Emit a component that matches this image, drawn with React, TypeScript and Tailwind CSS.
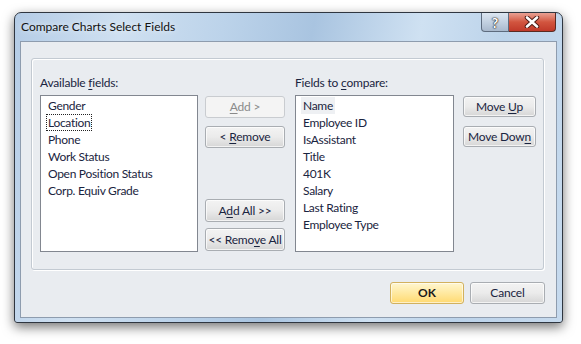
const font = "font-['Segoe_UI','Lato','Liberation_Sans',sans-serif]";

const leftFields = [
  "Gender",
  "Location",
  "Phone",
  "Work Status",
  "Open Position Status",
  "Corp. Equiv Grade",
];

const rightFields = [
  "Name",
  "Employee ID",
  "IsAssistant",
  "Title",
  "401K",
  "Salary",
  "Last Rating",
  "Employee Type",
];

function Mnemonic({ text, at }: { text: string; at: number }) {
  return (
    <span className="whitespace-pre">
      {text.slice(0, at)}
      <span className="underline underline-offset-2">{text[at]}</span>
      {text.slice(at + 1)}
    </span>
  );
}

function WinButton({
  children,
  className = "",
  disabled = false,
}: {
  children: React.ReactNode;
  className?: string;
  disabled?: boolean;
}) {
  return (
    <button
      disabled={disabled}
      className={
        "flex items-center justify-center rounded-[3px] border text-[12px] leading-none tracking-[-0.2px] " +
        (disabled
          ? "border-[#c9ccd0] bg-[#f4f4f4] text-[#8a8a8a] "
          : "border-[#a9adb2] bg-gradient-to-b from-[#f3f3f3] via-[#ebebeb] to-[#d6d6d6] text-[#1a2440] shadow-[inset_0_0_0_1px_rgba(255,255,255,0.7)] ") +
        className
      }
    >
      {children}
    </button>
  );
}

function ListBox({
  items,
  focused,
  selected,
  width,
}: {
  items: string[];
  focused?: string;
  selected?: string;
  width: string;
}) {
  return (
    <div
      className={`${width} h-[157px] border border-[#828790] bg-white pl-[5px] pt-[1px] text-[12px] tracking-[-0.3px] text-[#1a2440]`}
    >
      {items.map((item) => (
        <div key={item} className="h-[17px]">
          <span
            className={
              "inline-block h-[17px] px-[2px] leading-[18px] " +
              (focused === item ? "outline outline-1 outline-dotted outline-[#222] -outline-offset-1 " : "") +
              (selected === item ? "bg-[#eef0f3]" : "")
            }
          >
            {item}
          </span>
        </div>
      ))}
    </div>
  );
}

export default function App() {
  return (
    <div className={`min-h-screen bg-white pl-[14px] pt-[12px] ${font}`}>
      <div className="flex h-[311px] w-[549px] flex-col rounded-t-[7px] rounded-b-[3px] border border-[#2f3640] bg-[linear-gradient(100deg,#b4cce6_0%,#cfe0f1_18%,#bcd3ea_35%,#a9c4e0_50%,#cfe1f2_68%,#bcd3ea_82%,#c6daee_100%)] shadow-[0_4px_12px_rgba(0,0,0,0.55)]">
        {/* title bar */}
        <div className="flex h-[28px] items-start justify-between">
          <span className="pl-[6px] pt-[5px] text-[12px] text-[#111] [text-shadow:0_0_6px_rgba(255,255,255,0.9)]">
            Compare Charts Select Fields
          </span>
          <div className="mr-[6px] flex h-[19px]">
            <div className="flex w-[28px] items-center justify-center rounded-bl-[4px] border border-t-0 border-[#5d6b7e] bg-gradient-to-b from-[#dce6f1] via-[#c3d1e1] to-[#a9b9cd] text-[14px] font-bold text-white [text-shadow:0_0_1px_#222,0_0_1px_#222,0_0_2px_#333]">
              ?
            </div>
            <div className="flex w-[47px] items-center justify-center rounded-br-[4px] border border-l-0 border-t-0 border-[#5a2a22] bg-gradient-to-b from-[#e8a093] via-[#d2553f] to-[#c0392a]">
              <svg width="16" height="12" viewBox="0 0 16 12">
                <path
                  d="M3 1.5 L13 10.5 M13 1.5 L3 10.5"
                  stroke="#4a1a14"
                  strokeWidth="4.5"
                  strokeLinecap="round"
                />
                <path
                  d="M3 1.5 L13 10.5 M13 1.5 L3 10.5"
                  stroke="#fff"
                  strokeWidth="2.6"
                  strokeLinecap="round"
                />
              </svg>
            </div>
          </div>
        </div>

        {/* client area */}
        <div className="mx-[5px] h-[277px] border border-[#8e9cae] bg-[#e9ecf0]">
          <div className="ml-[10px] mt-[16px] flex h-[212px] w-[513px] rounded-[3px] border border-[#c3cad2] pl-[8px] pt-[15px] shadow-[inset_1px_1px_0_#fff,1px_1px_0_#fff]">
            <div>
              <div className="h-[16px] text-[12px] leading-[17px] tracking-[-0.2px] text-[#1a2440]">
                Available <Mnemonic text="fields:" at={0} />
              </div>
              <div className="mt-[5px]">
                <ListBox items={leftFields} focused="Location" width="w-[158px]" />
              </div>
            </div>

            <div className="ml-[7px] mt-[22px] flex w-[80px] flex-col">
              <WinButton disabled className="h-[22px] w-[80px]">
                <Mnemonic text="Add >" at={0} />
              </WinButton>
              <WinButton className="mt-[8px] h-[22px] w-[80px]">
                <Mnemonic text="< Remove" at={2} />
              </WinButton>
              <WinButton className="mt-[51px] h-[23px] w-[80px]">
                <Mnemonic text="Add All >>" at={1} />
              </WinButton>
              <WinButton className="mt-[6px] h-[23px] w-[80px]">
                <Mnemonic text="<< Remove All" at={7} />
              </WinButton>
            </div>

            <div className="ml-[10px]">
              <div className="h-[16px] text-[12px] leading-[17px] tracking-[-0.2px] text-[#1a2440]">
                Fields to <Mnemonic text="compare:" at={0} />
              </div>
              <div className="mt-[5px]">
                <ListBox items={rightFields} selected="Name" width="w-[159px]" />
              </div>
            </div>

            <div className="ml-[9px] mt-[22px] flex flex-col">
              <WinButton className="h-[21px] w-[73px]">
                <Mnemonic text="Move Up" at={5} />
              </WinButton>
              <WinButton className="mt-[9px] h-[21px] w-[73px]">
                <Mnemonic text="Move Down" at={8} />
              </WinButton>
            </div>
          </div>

          <div className="mt-[12px] flex w-[524px] justify-end gap-[6px]">
            <button className="flex h-[22px] w-[74px] items-center justify-center rounded-[3px] border border-[#d2b15e] bg-gradient-to-b from-[#fff6cf] via-[#ffe9a0] to-[#ffd96f] text-[12px] font-bold text-[#1a1a1a] shadow-[inset_0_0_0_1px_rgba(255,255,255,0.6)]">
              OK
            </button>
            <WinButton className="h-[22px] w-[75px]">Cancel</WinButton>
          </div>
        </div>
      </div>
    </div>
  );
}
